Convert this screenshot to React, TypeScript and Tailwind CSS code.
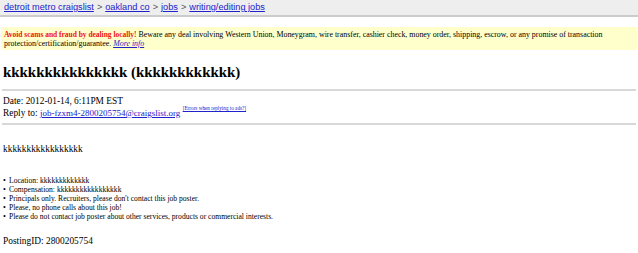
import React from 'react';

const crumbs = ['detroit metro craigslist', 'oakland co', 'jobs', 'writing/editing jobs'];

const bullets = [
  'Location: kkkkkkkkkkkkk',
  'Compensation: kkkkkkkkkkkkkkkkk',
  "Principals only. Recruiters, please don't contact this job poster.",
  'Please, no phone calls about this job!',
  'Please do not contact job poster about other services, products or commercial interests.',
];

const App: React.FC = () => {
  return (
    <div className="w-[638px] h-[253px] overflow-hidden bg-white text-black font-['Liberation_Serif','Times_New_Roman',serif]">
      {/* Breadcrumb bar */}
      <div className="h-[17px] bg-[#eeeeee] border-b-2 border-[#cccccc] px-[4px] flex items-center font-['Liberation_Sans',Arial,sans-serif] text-[9.2px] leading-[15px] text-[#555]">
        {crumbs.map((c, i) => (
          <span key={c} className="flex items-center">
            {i > 0 && <span className="mx-[3px]">&gt;</span>}
            <a className="text-[#2222cc] underline">{c}</a>
          </span>
        ))}
      </div>

      {/* Scam warning */}
      <div className="mt-[10px] mx-[1px] bg-[#ffffcc] px-[3px] pt-[3px] pb-[2px] text-[7.9px] leading-[9px]">
        <span className="font-bold text-[7.45px] text-[#ee1111]">Avoid scams and fraud by dealing locally!</span>{' '}
        Beware any deal involving Western Union, Moneygram, wire transfer, cashier check, money order, shipping, escrow, or any promise of transaction protection/certification/guarantee.{' '}
        <a className="italic underline text-[#2222cc]">More info</a>
      </div>

      <div className="px-[3px]">
        <h2 className="mt-[13px] text-[14.9px] leading-[18px] font-bold">
          kkkkkkkkkkkkkkk (kkkkkkkkkkkk)
        </h2>
        <hr className="mt-[8px] border-t-2 border-[#d8d8d8] -mx-[1px]" />

        <div className="mt-[4px] text-[9.4px] leading-[12px]">
          <div>Date: 2012-01-14, 6:11PM EST</div>
          <div>
            Reply to: <a className="text-[9px] text-[#2222cc] underline">job-fzxm4-2800205754@craigslist.org</a>{' '}
            <sup className="text-[5.2px] align-[3px] text-[#2222cc] underline">[Errors when replying to ads?]</sup>
          </div>
        </div>
        <hr className="mt-[4px] border-t-2 border-[#d8d8d8] -mx-[1px]" />

        <div className="mt-[18px] text-[9.4px] leading-[12px]">kkkkkkkkkkkkkkkkk</div>

        <ul className="mt-[21px] text-[7.6px] leading-[9px]">
          {bullets.map((b) => (
            <li key={b} className="flex items-center">
              <span className="w-[6px] text-[8px] leading-[9px]">•</span>
              <span>{b}</span>
            </li>
          ))}
        </ul>

        <div className="mt-[14px] text-[9.4px] leading-[12px]">PostingID: 2800205754</div>
      </div>
    </div>
  );
};

export default App;
